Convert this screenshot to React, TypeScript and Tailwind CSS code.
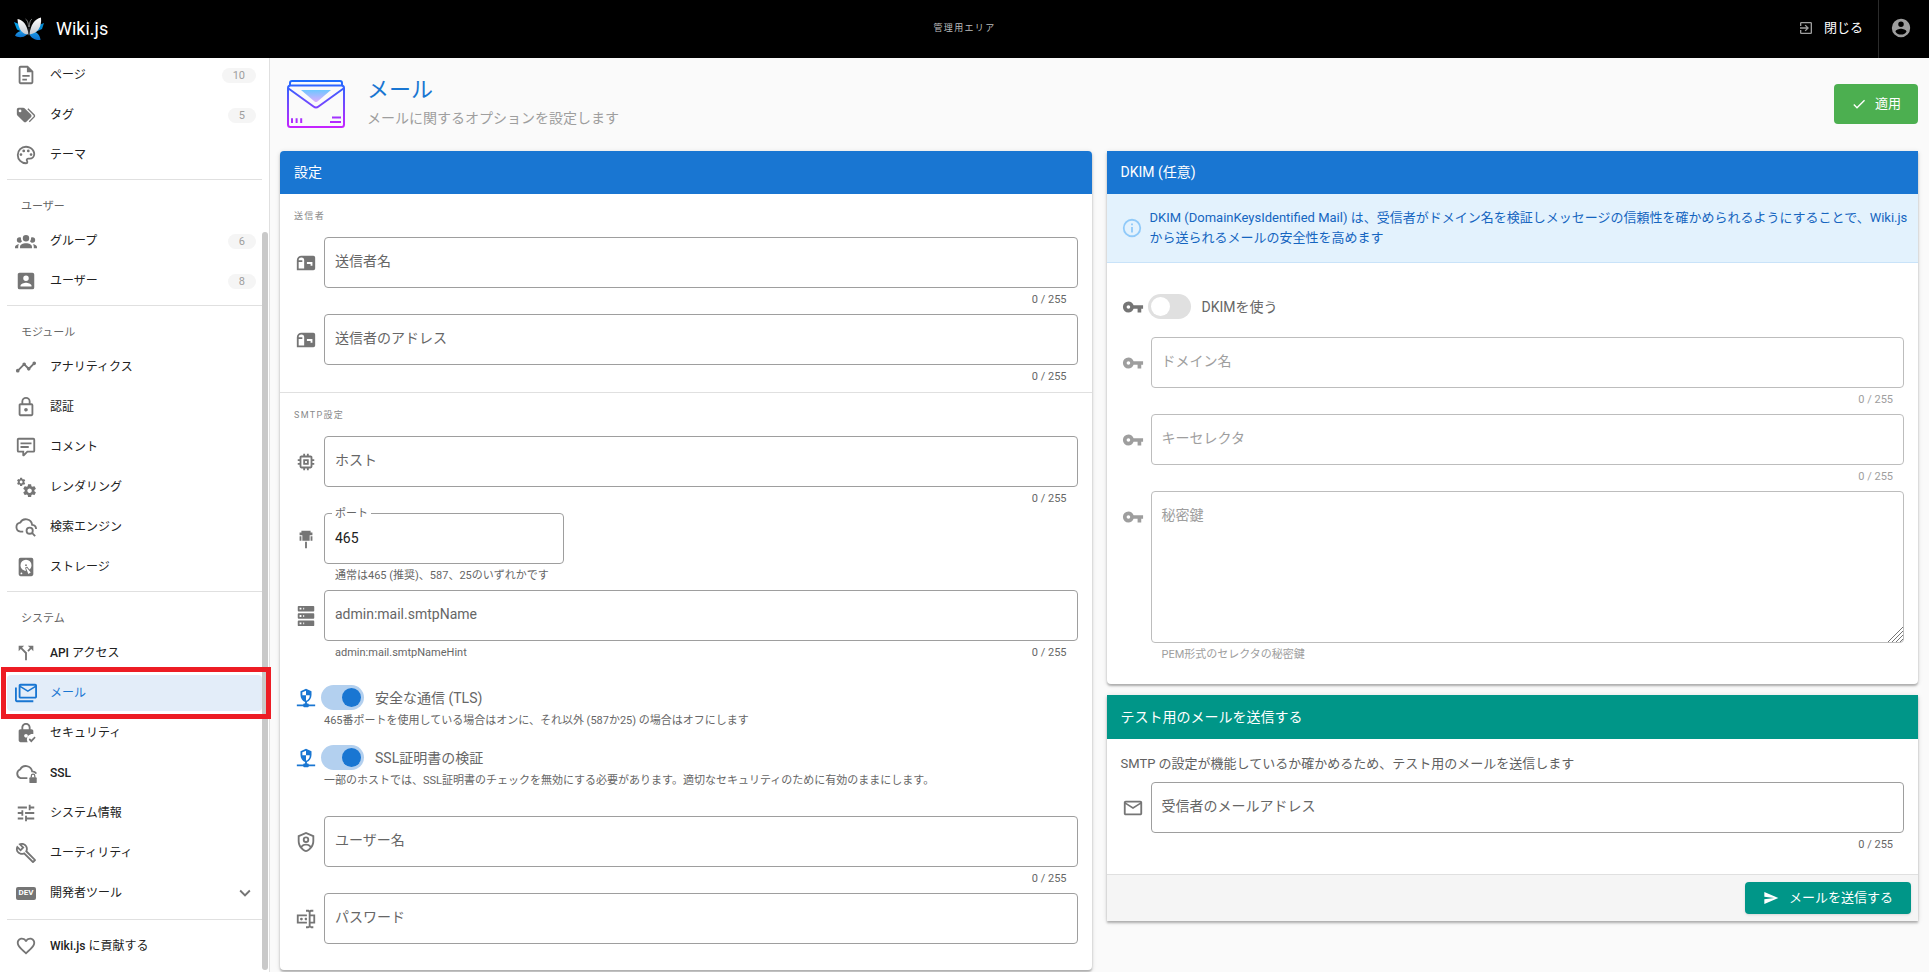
import { useState } from 'react'
import type { ReactNode } from 'react'
import clsx from 'clsx'

const P = {
  page: 'M6,2A2,2 0 0,0 4,4V20A2,2 0 0,0 6,22H18A2,2 0 0,0 20,20V8L14,2H6M6,4H13V9H18V20H6V4M8,12V14H16V12H8M8,16V18H13V16H8Z',
  tags: 'M5.5,9A1.5,1.5 0 0,0 7,7.5A1.5,1.5 0 0,0 5.5,6A1.5,1.5 0 0,0 4,7.5A1.5,1.5 0 0,0 5.5,9M17.41,11.58C17.77,11.94 18,12.44 18,13C18,13.55 17.78,14.05 17.41,14.41L12.41,19.41C12.05,19.77 11.55,20 11,20C10.45,20 9.95,19.78 9.58,19.41L2.59,12.42C2.22,12.05 2,11.55 2,11V6C2,4.89 2.89,4 4,4H9C9.55,4 10.05,4.22 10.41,4.58L17.41,11.58M13.54,5.71L14.54,4.71L21.41,11.58C21.78,11.94 22,12.45 22,13C22,13.55 21.78,14.05 21.42,14.41L16.04,19.79L15.04,18.79L20.75,13L13.54,5.71Z',
  palette: 'M12,22A10,10 0 0,1 2,12A10,10 0 0,1 12,2C17.5,2 22,6 22,11A6,6 0 0,1 16,17H14.2C13.9,17 13.7,17.2 13.7,17.5C13.7,17.6 13.8,17.7 13.8,17.8C14.2,18.3 14.4,18.9 14.4,19.5C14.5,20.9 13.4,22 12,22M12,4A8,8 0 0,0 4,12A8,8 0 0,0 12,20C12.3,20 12.5,19.8 12.5,19.5C12.5,19.3 12.4,19.2 12.4,19.1C12,18.6 11.8,18.1 11.8,17.5C11.8,16.1 12.9,15 14.3,15H16A4,4 0 0,0 20,11C20,7.1 16.4,4 12,4M6.5,10A1.5,1.5 0 0,1 8,11.5A1.5,1.5 0 0,1 6.5,13A1.5,1.5 0 0,1 5,11.5A1.5,1.5 0 0,1 6.5,10M9.5,6A1.5,1.5 0 0,1 11,7.5A1.5,1.5 0 0,1 9.5,9A1.5,1.5 0 0,1 8,7.5A1.5,1.5 0 0,1 9.5,6M14.5,6A1.5,1.5 0 0,1 16,7.5A1.5,1.5 0 0,1 14.5,9A1.5,1.5 0 0,1 13,7.5A1.5,1.5 0 0,1 14.5,6M17.5,10A1.5,1.5 0 0,1 19,11.5A1.5,1.5 0 0,1 17.5,13A1.5,1.5 0 0,1 16,11.5A1.5,1.5 0 0,1 17.5,10Z',
  group: 'M12,5.5A3.5,3.5 0 0,1 15.5,9A3.5,3.5 0 0,1 12,12.5A3.5,3.5 0 0,1 8.5,9A3.5,3.5 0 0,1 12,5.5M5,8C5.56,8 6.08,8.15 6.53,8.42C6.38,9.85 6.8,11.27 7.66,12.38C7.16,13.34 6.16,14 5,14A3,3 0 0,1 2,11A3,3 0 0,1 5,8M19,8A3,3 0 0,1 22,11A3,3 0 0,1 19,14C17.84,14 16.84,13.34 16.34,12.38C17.2,11.27 17.62,9.85 17.47,8.42C17.92,8.15 18.44,8 19,8M5.5,18.25C5.5,16.18 8.41,14.5 12,14.5C15.59,14.5 18.5,16.18 18.5,18.25V20H5.5V18.25M0,20V18.5C0,17.11 1.89,15.94 4.45,15.6C3.86,16.28 3.5,17.22 3.5,18.25V20H0M24,20H20.5V18.25C20.5,17.22 20.14,16.28 19.55,15.6C22.11,15.94 24,17.11 24,18.5V20Z',
  account: 'M6,17C6,15 10,13.9 12,13.9C14,13.9 18,15 18,17V18H6M15,9A3,3 0 0,1 12,12A3,3 0 0,1 9,9A3,3 0 0,1 12,6A3,3 0 0,1 15,9M3,5V19A2,2 0 0,0 5,21H19A2,2 0 0,0 21,19V5A2,2 0 0,0 19,3H5C3.89,3 3,3.9 3,5Z',
  timeline: 'M3,14L3.5,14.07L8.07,9.5C7.95,8.85 8.11,8.16 8.59,7.68C9.37,6.9 10.63,6.9 11.41,7.68C11.89,8.16 12.05,8.85 11.93,9.5L14.5,12.07L15,12C15.18,12 15.35,12 15.5,12.07L19.07,8.5C19,8.35 19,8.18 19,8A2,2 0 0,1 21,6A2,2 0 0,1 23,8A2,2 0 0,1 21,10C20.82,10 20.65,10 20.5,9.93L16.93,13.5C17,13.65 17,13.82 17,14A2,2 0 0,1 15,16A2,2 0 0,1 13,14L13.07,13.5L10.5,10.93C10.18,11 9.82,11 9.5,10.93L4.93,15.5L5,16A2,2 0 0,1 3,18A2,2 0 0,1 1,16A2,2 0 0,1 3,14Z',
  lock: 'M12,17C10.89,17 10,16.1 10,15C10,13.89 10.89,13 12,13A2,2 0 0,1 14,15A2,2 0 0,1 12,17M18,20V10H6V20H18M18,8A2,2 0 0,1 20,10V20A2,2 0 0,1 18,22H6C4.89,22 4,21.1 4,20V10C4,8.89 4.89,8 6,8H7V6A5,5 0 0,1 12,1A5,5 0 0,1 17,6V8H18M12,3A3,3 0 0,0 9,6V8H15V6A3,3 0 0,0 12,3Z',
  comment: 'M9,22A1,1 0 0,1 8,21V18H4A2,2 0 0,1 2,16V4C2,2.89 2.9,2 4,2H20A2,2 0 0,1 22,4V16A2,2 0 0,1 20,18H13.9L10.2,21.71C10,21.9 9.75,22 9.5,22V22H9M10,16V19.08L13.08,16H20V4H4V16H10M6,7H18V9H6V7M6,11H15V13H6V11Z',
  cogs: 'M15.9,18.45C17.25,18.45 18.35,17.35 18.35,16C18.35,14.65 17.25,13.55 15.9,13.55C14.54,13.55 13.45,14.65 13.45,16C13.45,17.35 14.54,18.45 15.9,18.45M21.1,16.68L22.58,17.84C22.71,17.95 22.75,18.13 22.66,18.29L21.26,20.71C21.17,20.86 21,20.92 20.83,20.86L19.09,20.16C18.73,20.44 18.33,20.67 17.91,20.85L17.64,22.7C17.62,22.87 17.47,23 17.3,23H14.5C14.32,23 14.18,22.87 14.15,22.7L13.89,20.85C13.46,20.67 13.07,20.44 12.71,20.16L10.96,20.86C10.81,20.92 10.62,20.86 10.54,20.71L9.14,18.29C9.05,18.13 9.09,17.95 9.22,17.84L10.7,16.68L10.65,16L10.7,15.31L9.22,14.16C9.09,14.05 9.05,13.86 9.14,13.71L10.54,11.29C10.62,11.13 10.81,11.07 10.96,11.13L12.71,11.84C13.07,11.56 13.46,11.32 13.89,11.15L14.15,9.29C14.18,9.13 14.32,9 14.5,9H17.3C17.47,9 17.62,9.13 17.64,9.29L17.91,11.15C18.33,11.32 18.73,11.56 19.09,11.84L20.83,11.13C21,11.07 21.17,11.13 21.26,11.29L22.66,13.71C22.75,13.86 22.71,14.05 22.58,14.16L21.1,15.31L21.15,16L21.1,16.68M6.69,8.07C7.56,8.07 8.26,7.37 8.26,6.5C8.26,5.63 7.56,4.92 6.69,4.92A1.58,1.58 0 0,0 5.11,6.5C5.11,7.37 5.82,8.07 6.69,8.07M10.03,6.94L11,7.68C11.07,7.75 11.09,7.87 11.03,7.97L10.13,9.53C10.08,9.63 9.96,9.67 9.86,9.63L8.74,9.18L8,9.62L7.81,10.81C7.79,10.92 7.7,11 7.59,11H5.79C5.67,11 5.58,10.92 5.56,10.81L5.4,9.62L4.64,9.18L3.52,9.63C3.41,9.67 3.3,9.63 3.24,9.53L2.34,7.97C2.28,7.87 2.31,7.75 2.39,7.68L3.34,6.94L3.31,6.5L3.34,6.06L2.39,5.32C2.31,5.25 2.28,5.13 2.34,5.03L3.24,3.47C3.3,3.37 3.41,3.33 3.52,3.37L4.63,3.82L5.4,3.38L5.56,2.19C5.58,2.08 5.67,2 5.79,2H7.59C7.7,2 7.79,2.08 7.81,2.19L8,3.38L8.74,3.82L9.86,3.37C9.96,3.33 10.08,3.37 10.13,3.47L11.03,5.03C11.09,5.13 11.07,5.25 11,5.32L10.03,6.06L10.06,6.5L10.03,6.94Z',
  disk: 'M6,2H18A2,2 0 0,1 20,4V20A2,2 0 0,1 18,22H6A2,2 0 0,1 4,20V4A2,2 0 0,1 6,2M12,4A6,6 0 0,0 6,10C6,13.31 8.69,16 12.1,16L11.22,13.77C10.95,13.29 11.11,12.68 11.59,12.4L12.45,11.9C12.93,11.63 13.54,11.79 13.82,12.27L15.74,14.69C17.12,13.59 18,11.9 18,10A6,6 0 0,0 12,4M12,9A1,1 0 0,1 13,10A1,1 0 0,1 12,11A1,1 0 0,1 11,10A1,1 0 0,1 12,9M7,18A1,1 0 0,0 6,19A1,1 0 0,0 7,20A1,1 0 0,0 8,19A1,1 0 0,0 7,18M12.09,13.27L14.58,19.58L17.17,18.08L12.95,12.77L12.09,13.27Z',
  split: 'M14,4L16.29,6.29L13.41,9.17L14.83,10.59L17.71,7.71L20,10V4M10,4H4V10L6.29,7.71L11,12.41V20H13V11.59L7.71,6.29',
  mails: 'M24,4C24,2.89 23.1,2 22,2H6C4.89,2 4,2.9 4,4V16C4,17.1 4.9,18 6,18H22C23.1,18 24,17.1 24,16V4M22,16H6V6L14,11L22,6V16M14,9L6,4H22L14,9M2,6H0V20C0,21.1 .9,22 2,22H20V20H2V6Z',
  lockCheck: 'M14,15C14,16.11 13.11,17 12,17C10.9,17 10,16.1 10,15C10,13.89 10.9,13 12,13C13.11,13 14,13.9 14,15M13.09,20C13.03,19.67 13,19.34 13,19C13,15.69 15.69,13 19,13C19.34,13 19.67,13.03 20,13.09V10C20,8.9 19.1,8 18,8H17V6C17,3.24 14.76,1 12,1S7,3.24 7,6V8H6C4.9,8 4,8.9 4,10V20C4,21.1 4.9,22 6,22H13.81C13.46,21.39 13.21,20.72 13.09,20M9,6C9,4.34 10.34,3 12,3S15,4.34 15,6V8H9V6M21.34,15.84L17.75,19.43L16.16,17.84L15,19.25L17.75,22.25L22.5,17.25L21.34,15.84Z',
  tune: 'M3,17V19H9V17H3M3,5V7H13V5H3M13,21V19H21V17H13V15H11V21H13M7,9V11H3V13H7V15H9V9H7M21,13V11H11V13H21M15,9H17V7H21V5H17V3H15V9Z',
  wrench: 'M22.61,19L13.53,9.91C14.46,7.57 14,4.81 12.09,2.91C9.79,.61 6.21,.4 3.66,2.26L7.5,6.11L6.08,7.52L2.25,3.69C.39,6.23 .6,9.82 2.9,12.11C4.76,13.97 7.47,14.46 9.79,13.59L18.9,22.7C19.29,23.09 19.92,23.09 20.31,22.7L22.61,20.4C23,20.03 23,19.39 22.61,19M19.61,20.59L10.15,11.13C9.54,11.58 8.86,11.85 8.15,11.95C6.79,12.15 5.36,11.74 4.32,10.7C3.37,9.76 2.93,8.5 3,7.26L6.09,10.35L10.33,6.11L7.24,3C8.48,2.96 9.73,3.39 10.68,4.33C11.76,5.41 12.17,6.9 11.92,8.29C11.8,9 11.5,9.66 11.04,10.25L20.5,19.7L19.61,20.59Z',
  heart: 'M12.1,18.55L12,18.65L11.89,18.55C7.14,14.24 4,11.39 4,8.5C4,6.5 5.5,5 7.5,5C9.04,5 10.54,6 11.07,7.36H12.93C13.46,6 14.96,5 16.5,5C18.5,5 20,6.5 20,8.5C20,11.39 16.86,14.24 12.1,18.55M16.5,3C14.76,3 13.09,3.81 12,5.08C10.91,3.81 9.24,3 7.5,3C4.42,3 2,5.41 2,8.5C2,12.27 5.4,15.36 10.55,20.03L12,21.35L13.45,20.03C18.6,15.36 22,12.27 22,8.5C22,5.41 19.58,3 16.5,3Z',
  chevron: 'M7.41,8.58L12,13.17L16.59,8.58L18,10L12,16L6,10L7.41,8.58Z',
  mailbox: 'M20,4H7A5,5 0 0,0 2,9V20H20A2,2 0 0,0 22,18V6A2,2 0 0,0 20,4M10,18H4V11H8V9H4A3,3 0 0,1 10,9V18M19,15H17V13H13V11H19V15Z',
  chip: 'M17,17H7V7H17M21,11V9H19V7C19,5.89 18.1,5 17,5H15V3H13V5H11V3H9V5H7C5.89,5 5,5.89 5,7V9H3V11H5V13H3V15H5V17A2,2 0 0,0 7,19H9V21H11V19H13V21H15V19H17A2,2 0 0,0 19,17V15H21V13H19V11M13,13H11V11H13M15,9H9V15H15V9Z',
  port: 'M7,3H17V5H19V8H16V14H8V8H5V5H7V3M17,9H19V14H17V9M5,9H7V14H5V9M11,15H13V22H11V15Z',
  server: 'M4,1H20A1,1 0 0,1 21,2V6A1,1 0 0,1 20,7H4A1,1 0 0,1 3,6V2A1,1 0 0,1 4,1M4,9H20A1,1 0 0,1 21,10V14A1,1 0 0,1 20,15H4A1,1 0 0,1 3,14V10A1,1 0 0,1 4,9M4,17H20A1,1 0 0,1 21,18V22A1,1 0 0,1 20,23H4A1,1 0 0,1 3,22V18A1,1 0 0,1 4,17M9,5H10V3H9V5M9,13H10V11H9V13M9,21H10V19H9V21M5,3V5H7V3H5M5,11V13H7V11H5M5,19V21H7V19H5Z',
  secureNet: 'M13,18H14A1,1 0 0,1 15,19H22V21H15A1,1 0 0,1 14,22H10A1,1 0 0,1 9,21H2V19H9A1,1 0 0,1 10,18H11V16.34C8.07,15.13 6,12 6,8.67V4.67L12,2L18,4.67V8.67C18,12.03 15.93,15.13 13,16.34V18M12,4L8,5.69V9H12V4M12,9V15C13.91,14.53 16,12.06 16,10V9H12Z',
  shield: 'M12,1L3,5V11C3,16.55 6.84,21.74 12,23C17.16,21.74 21,16.55 21,11V5L12,1M12,3.18L19,6.3V11C19,12.92 18.42,14.76 17.44,16.35C16.37,14.6 14,13.9 12,13.9C10,13.9 7.63,14.6 6.56,16.35C5.58,14.76 5,12.92 5,11V6.3L12,3.18M12,6A3.5,3.5 0 0,0 8.5,9.5A3.5,3.5 0 0,0 12,13A3.5,3.5 0 0,0 15.5,9.5A3.5,3.5 0 0,0 12,6M12,8A1.5,1.5 0 0,1 13.5,9.5A1.5,1.5 0 0,1 12,11A1.5,1.5 0 0,1 10.5,9.5A1.5,1.5 0 0,1 12,8M12,15.9C13.6,15.9 15.5,16.5 16.1,17.9C15,19.3 13.6,20.3 12,20.9C10.4,20.3 9,19.3 7.9,17.9C8.5,16.5 10.4,15.9 12,15.9Z',
  password: 'M17,7H22V17H17V19A1,1 0 0,0 18,20H20V22H17.5C16.95,22 16,21.55 16,21C16,21.55 15.05,22 14.5,22H12V20H14A1,1 0 0,0 15,19V5A1,1 0 0,0 14,4H12V2H14.5C15.05,2 16,2.45 16,3C16,2.45 16.95,2 17.5,2H20V4H18A1,1 0 0,0 17,5V7M2,7H13V9H4V15H13V17H2V7M20,15V9H17V15H20M8.5,12A1.5,1.5 0 0,0 7,10.5A1.5,1.5 0 0,0 5.5,12A1.5,1.5 0 0,0 7,13.5A1.5,1.5 0 0,0 8.5,12M13,10.89C12.39,10.33 11.44,10.38 10.88,11C10.32,11.6 10.37,12.55 11,13.11C11.55,13.63 12.43,13.63 13,13.11V10.89Z',
  key: 'M7,14A2,2 0 0,1 5,12A2,2 0 0,1 7,10A2,2 0 0,1 9,12A2,2 0 0,1 7,14M12.65,10C11.83,7.67 9.61,6 7,6A6,6 0 0,0 1,12A6,6 0 0,0 7,18C9.61,18 11.83,16.33 12.65,14H17V18H21V14H23V10H12.65Z',
  email: 'M22,6C22,4.9 21.1,4 20,4H4C2.9,4 2,4.9 2,6V18C2,19.1 2.9,20 4,20H20C21.1,20 22,19.1 22,18V6M20,6L12,11L4,6H20M20,18H4V8L12,13L20,8V18Z',
  info: 'M11,9H13V7H11M12,20C7.59,20 4,16.41 4,12C4,7.59 7.59,4 12,4C16.41,4 20,7.59 20,12C20,16.41 16.41,20 12,20M12,2A10,10 0 0,0 2,12A10,10 0 0,0 12,22A10,10 0 0,0 22,12A10,10 0 0,0 12,2M11,17H13V11H11V17Z',
  send: 'M2,21L23,12L2,3V10L17,12L2,14V21Z',
  check: 'M21,7L9,19L3.5,13.5L4.91,12.09L9,16.17L19.59,5.59L21,7Z',
  user: 'M12,19.2C9.5,19.2 7.29,17.92 6,16C6.03,14 10,12.9 12,12.9C14,12.9 17.97,14 18,16C16.71,17.92 14.5,19.2 12,19.2M12,5A3,3 0 0,1 15,8A3,3 0 0,1 12,11A3,3 0 0,1 9,8A3,3 0 0,1 12,5M12,2A10,10 0 0,0 2,12A10,10 0 0,0 12,22A10,10 0 0,0 22,12C22,6.47 17.5,2 12,2Z',
  exit: 'M19,3H5C3.89,3 3,3.89 3,5V9H5V5H19V19H5V15H3V19A2,2 0 0,0 5,21H19A2,2 0 0,0 21,19V5C21,3.89 20.1,3 19,3M10.08,15.58L11.5,17L16.5,12L11.5,7L10.08,8.41L12.67,11H3V13H12.67L10.08,15.58Z',
}

function Icon({ d, className = 'size-[22px]' }: { d: string; className?: string }) {
  return (
    <svg viewBox="0 0 24 24" fill="currentColor" fillRule="evenodd" className={clsx('shrink-0', className)} aria-hidden="true">
      <path d={d} />
    </svg>
  )
}

function CloudSearch() {
  return (
    <svg viewBox="0 0 24 24" fill="none" stroke="currentColor" strokeWidth="2" className="size-[22px] shrink-0" aria-hidden="true">
      <path d="M9 17H6A4.900 4.900 0 0 1 5.600 7.300A7 7 0 0 1 18.700 9.700C21.300 10 23 11.600 23 14.200" />
      <circle cx="16" cy="16" r="3.400" />
      <path d="M18.500 18.500L22 22" />
    </svg>
  )
}

function CloudLock() {
  return (
    <svg viewBox="0 0 24 24" fill="none" stroke="currentColor" strokeWidth="2" className="size-[22px] shrink-0" aria-hidden="true">
      <path d="M13.500 17.500H6A4.900 4.900 0 0 1 5.600 8.200A7 7 0 0 1 18.700 10.200C21 10.200 22.400 11 23.200 12.600" />
      <path d="M17.800 17V15.200A1.900 1.900 0 0 1 21.600 15.200V17" strokeWidth="1.400" />
      <rect x="15.700" y="16.600" width="8" height="6.400" rx="1" fill="currentColor" stroke="none" />
    </svg>
  )
}

function DevBadge() {
  return (
    <span className="mx-px flex h-[13px] w-5 shrink-0 items-center justify-center rounded-xs bg-[#757575] text-[8px] leading-none font-bold text-white">DEV</span>
  )
}

function Logo() {
  return (
    <svg viewBox="0 0 30 24" className="h-6 w-[30px] shrink-0" aria-hidden="true">
      <defs>
        <linearGradient id="wing" x1="0" y1="0" x2="0" y2="1">
          <stop offset="0" stopColor="#ffffff" />
          <stop offset="1" stopColor="#c3c8d0" />
        </linearGradient>
        <linearGradient id="blue" x1="0" y1="0" x2="0" y2="1">
          <stop offset="0" stopColor="#1e9be8" />
          <stop offset="1" stopColor="#0d6fca" />
        </linearGradient>
      </defs>
      <path d="M0 5L5 7L9 13L13 17L3 12.500Z" fill="#039be5" />
      <path d="M30 6L25 8L21 13L17 17L28 12Z" fill="#0288d1" />
      <path d="M14 15C9 12.500 3 14 1 18.500C3 20.500 9 21.500 13 17.500Z" fill="url(#blue)" />
      <path d="M16 15C20 13 26 16 26.500 23C22 23.500 17 21.500 15.500 17Z" fill="url(#blue)" />
      <path d="M14.500 17.500C9 17.500 4 13 3.500 2C9 3 13.500 8 14.500 17.500Z" fill="url(#wing)" />
      <path d="M15.500 17.500C16.500 8 20.500 2 27 0.500C28 10 23.500 16.500 15.500 17.500Z" fill="url(#wing)" />
      <path d="M14.600 10C14.300 6 13.500 3 11.500 2M15.400 10C15.500 6 16 3 18 2" fill="none" stroke="#8d8d8d" strokeWidth="0.800" />
      <path d="M15 8L15.700 17L15 19L14.300 17Z" fill="#4a5058" />
    </svg>
  )
}

function EnvelopeArt() {
  return (
    <svg viewBox="0 0 58 48" fill="none" className="h-12 w-[58px] shrink-0" aria-hidden="true">
      <defs>
        <linearGradient id="edge" gradientUnits="userSpaceOnUse" x1="0" y1="0" x2="0" y2="48">
          <stop offset="0" stopColor="#1a6dff" />
          <stop offset="1" stopColor="#c822ff" />
        </linearGradient>
        <linearGradient id="flap" gradientUnits="userSpaceOnUse" x1="0" y1="10" x2="0" y2="23">
          <stop offset="0" stopColor="#6dc7ff" />
          <stop offset="1" stopColor="#e6abff" />
        </linearGradient>
      </defs>
      <path d="M14 10H44L30.500 21.500Q29 22.500 27.500 21.500Z" fill="url(#flap)" />
      <g stroke="url(#edge)" strokeWidth="2">
        <path d="M3 6V3Q3 1 5 1H53Q55 1 55 3V6" />
        <rect x="1" y="5.500" width="56" height="41.500" rx="2.500" />
        <path d="M1.500 8.500L26.500 26.500Q29 28.500 31.500 26.500L56.500 8.500" />
        <path d="M5 38.200V43M9.600 38.200V43M14.200 38.200V43" />
        <path d="M45 37.500L54 37.490M43 42.010L54 42" />
      </g>
    </svg>
  )
}

interface NavEntry { label: string; icon: ReactNode; count?: number; active?: boolean; expand?: boolean }

const contentNav: NavEntry[] = [
  { label: 'ページ', icon: <Icon d={P.page} />, count: 10 },
  { label: 'タグ', icon: <Icon d={P.tags} />, count: 5 },
  { label: 'テーマ', icon: <Icon d={P.palette} /> },
]
const userNav: NavEntry[] = [
  { label: 'グループ', icon: <Icon d={P.group} />, count: 6 },
  { label: 'ユーザー', icon: <Icon d={P.account} />, count: 8 },
]
const moduleNav: NavEntry[] = [
  { label: 'アナリティクス', icon: <Icon d={P.timeline} /> },
  { label: '認証', icon: <Icon d={P.lock} /> },
  { label: 'コメント', icon: <Icon d={P.comment} /> },
  { label: 'レンダリング', icon: <Icon d={P.cogs} /> },
  { label: '検索エンジン', icon: <CloudSearch /> },
  { label: 'ストレージ', icon: <Icon d={P.disk} /> },
]
const systemNav: NavEntry[] = [
  { label: 'API アクセス', icon: <Icon d={P.split} /> },
  { label: 'メール', icon: <Icon d={P.mails} />, active: true },
  { label: 'セキュリティ', icon: <Icon d={P.lockCheck} /> },
  { label: 'SSL', icon: <CloudLock /> },
  { label: 'システム情報', icon: <Icon d={P.tune} /> },
  { label: 'ユーティリティ', icon: <Icon d={P.wrench} /> },
  { label: '開発者ツール', icon: <DevBadge />, expand: true },
]
const footerNav: NavEntry[] = [{ label: 'Wiki.js に貢献する', icon: <Icon d={P.heart} /> }]

// latin words are set in medium, kana and kanji stay regular
function NavLabel({ text }: { text: string }) {
  return (
    <span className="ml-[13px] flex-1">
      {text.split(/([A-Za-z.]+)/).map((part, i) => (i % 2 ? <span key={i} className="font-medium">{part}</span> : part))}
    </span>
  )
}

function NavGroup({ title, items }: { title?: string; items: NavEntry[] }) {
  return (
    <div>
      {title && <h2 className="flex h-[35px] items-center pt-[3px] pl-3.5 text-[11px] text-[#666]">{title}</h2>}
      <ul className="flex flex-col gap-1">
        {items.map(item => (
          <li key={item.label} className="relative">
            <a
              href="#"
              aria-current={item.active ? 'page' : undefined}
              className={clsx('flex h-9 items-center rounded-sm pr-1.5 pl-2 text-xs', item.active ? 'bg-[#e3edf9] text-[#1976d2]' : 'text-[#212121]')}
            >
              <span className={item.active ? 'text-[#1976d2]' : 'text-[#757575]'}>{item.icon}</span>
              <NavLabel text={item.label} />
              {item.count && <span className="rounded-full bg-[#f5f5f5] px-[11px] text-[11px] leading-[15px] text-[#9e9e9e]">{item.count}</span>}
              {item.expand && <Icon d={P.chevron} className="size-[22px] text-[#757575]" />}
            </a>
            {item.active && <div className="pointer-events-none absolute -inset-y-2 -right-[9px] -left-1.5 border-[5px] border-[#ed1c24]" />}
          </li>
        ))}
      </ul>
    </div>
  )
}

function NavDivider({ className = 'mt-1.5' }: { className?: string }) {
  return <hr className={clsx('mb-2 border-[#e0e0e0]', className)} />
}

interface FieldProps {
  id: string
  label: string
  icon: string
  type?: string
  value?: string
  hint?: string
  counter?: boolean
  disabled?: boolean
  narrow?: boolean
  multiline?: boolean
}

function Field({ id, label, icon, type = 'text', value = '', hint, counter, disabled, narrow, multiline }: FieldProps) {
  const [text, setText] = useState(value)
  const muted = disabled ? 'text-[#9e9e9e]' : 'text-[#666]'
  const box = clsx(
    'block w-full rounded-sm border bg-white px-[10px] text-sm text-[#212121] outline-none focus:border-[#1976d2]',
    disabled ? 'border-[#bdbdbd]' : 'border-[#9e9e9e]',
  )
  return (
    <div className="flex gap-[7px]">
      <span className={clsx('flex h-[51px] items-center pl-px', disabled ? 'text-[#9e9e9e]' : 'text-[#757575]')}><Icon d={icon} /></span>
      <div className={clsx('relative', narrow ? 'w-60' : 'flex-1')}>
        {multiline ? (
          <div className="relative">
            <textarea id={id} value={text} disabled={disabled} onChange={e => setText(e.target.value)} className={clsx(box, 'h-[152px] resize-none py-[14px]')} />
            <svg viewBox="0 0 15 15" stroke="#757575" className="pointer-events-none absolute right-px bottom-px size-[15px]" aria-hidden="true">
              <path d="M0 15L15 0M4 15L15 4M8 15L15 8M12 15L15 12" />
            </svg>
          </div>
        ) : (
          <input id={id} type={type} value={text} disabled={disabled} onChange={e => setText(e.target.value)} className={clsx(box, 'h-[51px] pb-0.5')} />
        )}
        <label
          htmlFor={id}
          className={clsx('absolute', muted, text ? '-top-[7px] left-2 bg-white px-[3px] text-[11px] leading-4' : 'top-3.5 left-[11px] text-sm leading-5')}
        >
          {label}
        </label>
        <div className={clsx('flex h-[26px] justify-between px-[11px] pt-1 text-[11px] leading-4', muted)}>
          <span className="whitespace-nowrap">{hint}</span>
          {counter && <span>{text.length} / 255</span>}
        </div>
      </div>
    </div>
  )
}

function Toggle({ id, label, icon, on = false }: { id: string; label: string; icon: string; on?: boolean }) {
  const [checked, setChecked] = useState(on)
  return (
    <div className="flex h-[25px] items-center pl-px">
      <Icon d={icon} className={clsx('size-[22px]', checked ? 'text-[#1976d2]' : 'text-[#757575]')} />
      <label htmlFor={id} className="ml-1 flex items-center gap-[11px] text-sm text-[#666]">
        <input id={id} type="checkbox" role="switch" checked={checked} onChange={e => setChecked(e.target.checked)} className="peer sr-only" />
        <span className={clsx('flex h-[25px] w-[43px] items-center rounded-full px-[3px]', checked ? 'justify-end bg-[#b3d0ef]' : 'justify-start bg-[#e0e0e0]')}>
          <span className={clsx('size-[19px] rounded-full', checked ? 'bg-[#1976d2]' : 'bg-white')} />
        </span>
        {label}
      </label>
    </div>
  )
}

function Overline({ children }: { children: ReactNode }) {
  return <h3 className="flex h-[43px] items-center pt-0.5 text-[9px] tracking-[0.15em] text-[#8a8a8a]">{children}</h3>
}

const card = 'bg-white shadow-[0_2px_2px_rgba(0,0,0,0.24),0_1px_5px_rgba(0,0,0,0.14)]'

export default function App() {
  return (
    <div className="flex h-screen flex-col overflow-hidden bg-[#fafafa] font-[Roboto,'Noto_Sans_CJK_JP',sans-serif] text-[#212121]">
      <header className="z-20 grid h-[58px] shrink-0 grid-cols-3 items-center bg-black text-white">
        <div className="flex items-center gap-3 pl-3.5">
          <Logo />
          <span className="text-lg leading-6">Wiki.js</span>
        </div>
        <span className="text-center text-[9px] tracking-[0.15em] text-[#bdbdbd]">管理用エリア</span>
        <div className="flex h-full items-center justify-end">
          <button className="flex h-full items-center gap-2.5 pr-[15px] pb-0.5 text-[13px]">
            <Icon d={P.exit} className="size-4 text-[#9e9e9e]" />閉じる
          </button>
          <button aria-label="アカウント" className="flex h-full w-[51px] items-center justify-center border-l border-[#2b2b2b] pr-1.5 pb-0.5 text-[#9e9e9e]">
            <Icon d={P.user} />
          </button>
        </div>
      </header>

      <div className="flex min-h-0 flex-1">
        <nav className="relative z-10 flex w-[270px] shrink-0 flex-col justify-end border-r border-[#e0e0e0] bg-white px-[7px] pb-2">
          <NavGroup items={contentNav} />
          <NavDivider />
          <NavGroup title="ユーザー" items={userNav} />
          <NavDivider />
          <NavGroup title="モジュール" items={moduleNav} />
          <NavDivider />
          <NavGroup title="システム" items={systemNav} />
          <NavDivider className="mt-2" />
          <NavGroup items={footerNav} />
          <div className="absolute top-[174px] right-px bottom-0.5 -z-10 w-1.5 rounded-full bg-[#c9c9c9]" />
        </nav>

        <main className="min-w-0 flex-1 pr-[11px] pl-[10px]">
          <div className="flex h-[93px] items-center pb-0.5 pl-[7px]">
            <EnvelopeArt />
            <div className="ml-[22px] flex-1">
              <h1 className="text-[22px] leading-7 text-[#1976d2]">メール</h1>
              <p className="text-sm leading-7 text-[#9e9e9e]">メールに関するオプションを設定します</p>
            </div>
            <button className="flex h-10 w-[84px] items-center justify-center gap-2 rounded-sm bg-[#4caf50] text-[13px] text-white">
              <Icon d={P.check} className="size-4" />適用
            </button>
          </div>

          <div className="grid grid-cols-2 items-start gap-[15px]">
            <form className={clsx(card, 'rounded-sm')}>
              <h2 className="flex h-[43px] items-center rounded-t-sm bg-[#1976d2] px-[14px] pb-0.5 text-sm text-white">設定</h2>
              <div className="px-[14px] pb-px">
                <Overline>送信者</Overline>
                <Field id="sender-name" label="送信者名" icon={P.mailbox} counter />
                <Field id="sender-email" label="送信者のアドレス" icon={P.mailbox} counter />
              </div>
              <div className="border-t border-[#e0e0e0] px-[14px]">
                <Overline>SMTP設定</Overline>
                <Field id="host" label="ホスト" icon={P.chip} counter />
                <Field id="port" label="ポート" icon={P.port} value="465" hint="通常は465 (推奨)、587、25のいずれかです" narrow />
                <Field id="smtp-name" label="admin:mail.smtpName" icon={P.server} hint="admin:mail.smtpNameHint" counter />
                <div className="pt-[18px]">
                  <Toggle id="tls" label="安全な通信 (TLS)" icon={P.secureNet} on />
                  <p className="pl-[30px] text-[11px] leading-[22px] text-[#666]">465番ポートを使用している場合はオンに、それ以外 (587か25) の場合はオフにします</p>
                </div>
                <div className="pt-[13px] pb-6">
                  <Toggle id="verify-ssl" label="SSL証明書の検証" icon={P.secureNet} on />
                  <p className="pl-[30px] text-[11px] leading-[22px] text-[#666]">一部のホストでは、SSL証明書のチェックを無効にする必要があります。適切なセキュリティのために有効のままにします。</p>
                </div>
                <Field id="username" label="ユーザー名" icon={P.shield} counter />
                <Field id="password" label="パスワード" icon={P.password} type="password" />
              </div>
            </form>

            <div className="flex flex-col gap-[11px]">
              <form className={clsx(card, 'rounded-b-sm')}>
                <h2 className="flex h-[43px] items-center bg-[#1976d2] px-[14px] pb-0.5 text-sm text-white">DKIM (任意)</h2>
                <div className="flex h-[69px] items-center gap-[7px] border-b border-[#c9e3f9] bg-[#e3f2fd] pr-1 pl-[14px] text-[13px] leading-5 text-[#1565c0]">
                  <Icon d={P.info} className="size-[22px] text-[#90caf9]" />
                  <p>DKIM (DomainKeysIdentified Mail) は、受信者がドメイン名を検証しメッセージの信頼性を確かめられるようにすることで、Wiki.jsから送られるメールの安全性を高めます</p>
                </div>
                <div className="px-[14px] pt-[31px] pb-[15px]">
                  <div className="mb-[18px]">
                    <Toggle id="use-dkim" label="DKIMを使う" icon={P.key} />
                  </div>
                  <Field id="dkim-domain" label="ドメイン名" icon={P.key} counter disabled />
                  <Field id="dkim-selector" label="キーセレクタ" icon={P.key} counter disabled />
                  <Field id="dkim-key" label="秘密鍵" icon={P.key} hint="PEM形式のセレクタの秘密鍵" disabled multiline />
                </div>
              </form>

              <form className={card}>
                <h2 className="flex h-11 items-center bg-[#009688] px-[14px] text-sm text-white">テスト用のメールを送信する</h2>
                <div className="px-[14px] py-[15px]">
                  <p className="mb-2 text-[13px] leading-5 text-[#616161]">SMTP の設定が機能しているか確かめるため、テスト用のメールを送信します</p>
                  <Field id="test-email" label="受信者のメールアドレス" icon={P.email} type="email" counter />
                </div>
                <div className="flex justify-end border-t border-[#e0e0e0] bg-[#f5f5f5] p-[7px]">
                  <button type="button" className="flex h-8 items-center gap-[10px] rounded-sm bg-[#009688] px-[18px] text-[13px] text-white shadow">
                    <Icon d={P.send} className="size-4" />メールを送信する
                  </button>
                </div>
              </form>
            </div>
          </div>
        </main>
      </div>
    </div>
  )
}
